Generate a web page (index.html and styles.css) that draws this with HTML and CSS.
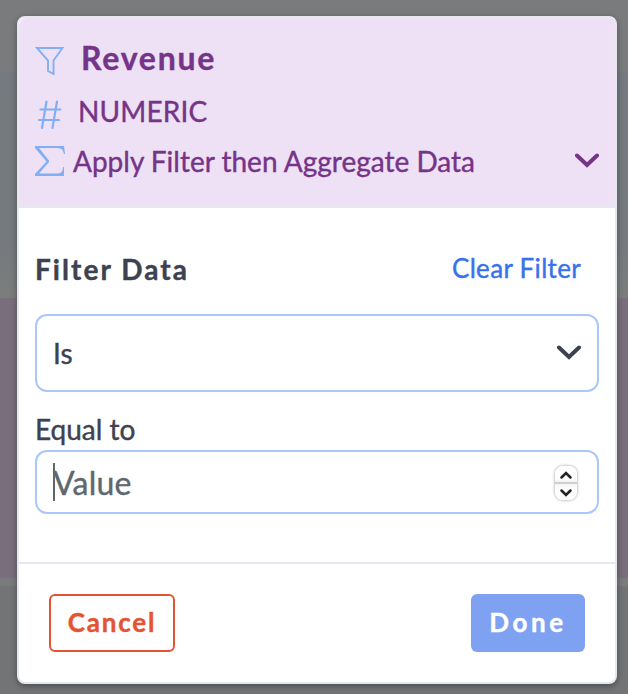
FILE: index.html
```
<!DOCTYPE html>
<html lang="en">
<head>
<meta charset="utf-8">
<title>Filter</title>
<link rel="stylesheet" href="styles.css">
</head>
<body>
<main class="card">
  <header class="head">
    <div class="row title">
      <svg class="funnel" width="32" height="32" viewBox="0 0 32 32"><path d="M2 3H27.500L18.500 15.500V29L13 26V15.500Z"/></svg>
      <h1>Revenue</h1>
    </div>
    <div class="row kind">
      <svg class="hash" width="26" height="30" viewBox="0 0 26 30"><path d="M9.500 1.500L5 28M20 1.500L15.500 28M3.500 9.500H23.500M2 20H22"/></svg>
      <span>NUMERIC</span>
    </div>
    <div class="row mode">
      <svg class="sigma" width="31" height="30" viewBox="0 0 31 30"><path d="M0 0H29L30 8H29Q28 2 23 2H4L14 14.500V16L4 27.500H23Q28 27 28 21H29V30H0V28L11.500 15.500L0 2Z"/></svg>
      <span>Apply Filter then Aggregate Data</span>
      <svg class="chevron" width="24" height="16" viewBox="0 0 24 16"><path d="M2 2.500L12 12L22 2.500"/></svg>
    </div>
  </header>
  <section class="body">
    <div class="bar">
      <h2>Filter Data</h2>
      <a class="clear">Clear Filter</a>
    </div>
    <div class="select">
      <span>Is</span>
      <svg class="chevron" width="24" height="16" viewBox="0 0 24 16"><path d="M2 2.500L12 12L22 2.500"/></svg>
    </div>
    <div class="label">Equal to</div>
    <div class="field">
      <span class="caret"></span>
      <span class="placeholder">Value</span>
      <span class="stepper">
        <svg width="22" height="17" viewBox="0 0 22 17"><path d="M6.500 11.500L11 7L15.500 11.500"/></svg>
        <svg width="22" height="17" viewBox="0 0 22 17"><path d="M6.500 7.500L11 12L15.500 7.500"/></svg>
      </span>
    </div>
  </section>
  <footer class="foot">
    <button class="cancel">Cancel</button>
    <button class="done">Done</button>
  </footer>
</main>
</body>
</html>
```
FILE: styles.css
```
* { box-sizing: border-box; }
body {
  margin: 0;
  height: 694px;
  padding: 16px 11px 10px 17px;
  overflow: hidden;
  font: 28px Lato, sans-serif;
  color: #3d4251;
  -webkit-text-stroke: .4px currentColor;
  background: linear-gradient(#7a7b7c 0 72px, #757a80 72px, #767a7e 250px, #7b7d7b 298px, #796f7c 298px 578px, #797b7c 578px 586px, #727475 586px);
}
h1, h2 { margin: 0; font-weight: 700; }
svg { display: block; flex: none; fill: none; }
.card {
  width: 600px;
  height: 668px;
  border: 2px solid #e6e8ef;
  border-radius: 8px;
  background: #fff;
  box-shadow: 0 2px 6px rgba(0, 0, 0, .35);
}
.head {
  height: 190px;
  padding: 15px 16px 0;
  border-bottom: 2px solid #e6e8ef;
  border-radius: 8px 0 0;
  background: #eee1f5;
  color: #763488;
}
.row { display: flex; align-items: center; height: 50px; white-space: nowrap; }
.title { margin-bottom: 3px; }
.title h1 { margin: 0 0 2px 14px; font-size: 32px; letter-spacing: 1.75px; }
.funnel { margin-top: 5px; stroke: #82aff4; stroke-width: 1.9; }
.hash { margin: 7px 15px 0 2px; stroke: #82aff4; stroke-width: 2.2; stroke-linecap: round; }
.kind span { letter-spacing: .15px; }
.sigma { margin-right: 7px; fill: #82aff4; }
.chevron { margin-left: auto; stroke: currentColor; stroke-width: 4; stroke-linecap: round; }
.body { height: 354px; padding: 43px 16px 0; }
.bar { display: flex; align-items: center; justify-content: space-between; height: 36px; padding-right: 18px; }
.bar h2 { font-size: 28px; letter-spacing: 2.05px; }
.clear { margin-bottom: 2px; color: #3872eb; font-size: 26px; letter-spacing: .32px; }
.select, .field { display: flex; align-items: center; border: 2px solid #a9c7f8; border-radius: 12px; }
.select { height: 78px; margin-top: 27px; padding: 0 16px; }
.label { height: 58px; padding-top: 8px; line-height: 58px; }
.field { height: 64px; padding: 0 19px 0 16px; color: #5f676e; font-size: 32px; }
.caret { width: 2px; height: 38px; margin-right: -2px; background: #5f676e; }
.placeholder { letter-spacing: .25px; }
.stepper {
  width: 22px;
  height: 34px;
  margin: 1px 1px 0 auto;
  border-radius: 8px;
  background: linear-gradient(#fff 13px, #f0f0f0 16px, #d0d0d0 16px 18px, #f5f5f5 18px, #fff 23px);
  box-shadow: 0 0 3px rgba(0, 0, 0, .45);
}
.stepper svg { stroke: #222; stroke-width: 2.5; stroke-linecap: round; }
.foot { display: flex; justify-content: space-between; height: 120px; padding: 30px 30px 0; border-top: 2px solid #e6e8ef; }
.foot button { height: 58px; padding: 0 0 2px; border-radius: 6px; font: 700 26px Lato, sans-serif; -webkit-text-stroke: .4px currentColor; }
.cancel { width: 126px; border: 2px solid #e45333; background: #fff; color: #e45333; letter-spacing: 1.8px; }
.done { width: 114px; border: 0; background: #7ea2f1; color: #fff; letter-spacing: 3.6px; }
```
